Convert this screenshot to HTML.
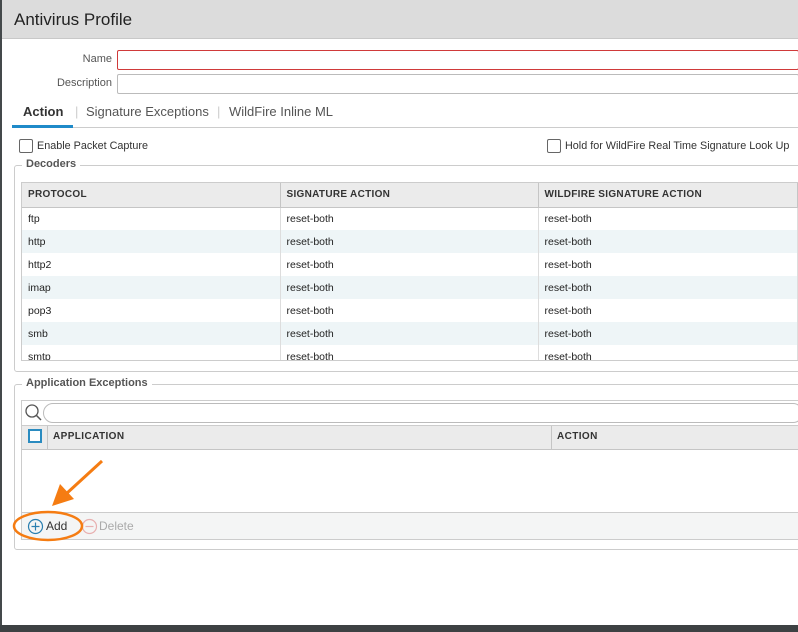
<!DOCTYPE html>
<html><head><style>
*{margin:0;padding:0;box-sizing:border-box}
body{width:798px;height:632px;background:#44494b;font-family:"Liberation Sans",sans-serif;position:relative;overflow:hidden;color:#333}
.a{position:absolute}
#dlg{left:2px;top:0;width:796px;height:625px;background:#fff;}
.hdr{left:2px;top:0;width:796px;height:39px;background:#dcdcdc;border-bottom:1px solid #c8c8c8}
.lbl{font-size:11px;color:#555;text-align:right;width:100px}
.inp{background:#fff;border:1px solid #bbb;border-radius:2px}
.t{font-size:10.8px;color:#333;white-space:nowrap}
.cb{width:14px;height:14px;border:1px solid #666;border-radius:2px;background:#fff}
.fs{border:1px solid #ccc;border-radius:3px}
.leg{background:#fff;padding:0 4px;font-size:11px;color:#555;font-weight:bold}
th,td{font-size:10.5px;text-align:left;padding-left:6px;white-space:nowrap}
table{border-collapse:collapse;table-layout:fixed}
th{height:24px;background:#ebebeb;color:#333;letter-spacing:.3px;border-right:1px solid #c5c5c5;border-bottom:1px solid #c5c5c5;font-weight:bold;font-size:10px}
td{height:23px;border-right:1px solid #ddd;color:#222}
tr.alt td{background:#eef5f7}
</style></head><body>
<div id="dlg" class="a"></div>
<div class="a hdr"></div>
<div class="a" style="left:14px;top:10px;font-size:17px;color:#222">Antivirus Profile</div>
<div class="a lbl" style="left:12px;top:53px">Name</div>
<div class="a inp" style="left:117px;top:50px;width:682px;height:20px;border-color:#d03a3a"></div>
<div class="a lbl" style="left:12px;top:77px">Description</div>
<div class="a inp" style="left:117px;top:74px;width:682px;height:20px"></div>
<div class="a" style="left:12px;top:127px;width:786px;height:1px;background:#ccc"></div>
<div class="a" style="left:12px;top:125px;width:61px;height:3px;background:#1f8ac9"></div>
<div class="a" style="left:23px;top:104px;font-size:13px;font-weight:bold;color:#333">Action</div>
<div class="a" style="left:75px;top:104px;font-size:13px;color:#ccc">|</div>
<div class="a" style="left:86px;top:104px;font-size:13px;color:#555">Signature Exceptions</div>
<div class="a" style="left:217px;top:104px;font-size:13px;color:#ccc">|</div>
<div class="a" style="left:229px;top:104px;font-size:13px;color:#555">WildFire Inline ML</div>
<div class="a cb" style="left:19px;top:139px"></div>
<div class="a t" style="left:37px;top:140px">Enable Packet Capture</div>
<div class="a cb" style="left:547px;top:139px"></div>
<div class="a t" style="left:565px;top:140px">Hold for WildFire Real Time Signature Look Up</div>
<div class="a fs" style="left:14px;top:165px;width:800px;height:207px"></div>
<div class="a leg" style="left:22px;top:158px">Decoders</div>
<div class="a" style="left:21px;top:182px;width:777px;height:179px;overflow:hidden;border:1px solid #ccc;border-right:none">
<table style="width:775px"><colgroup><col style="width:258px"><col style="width:258px"><col style="width:259px"></colgroup>
<tr><th>PROTOCOL</th><th>SIGNATURE ACTION</th><th>WILDFIRE SIGNATURE ACTION</th></tr>
<tr><td>ftp</td><td>reset-both</td><td>reset-both</td></tr>
<tr class="alt"><td>http</td><td>reset-both</td><td>reset-both</td></tr>
<tr><td>http2</td><td>reset-both</td><td>reset-both</td></tr>
<tr class="alt"><td>imap</td><td>reset-both</td><td>reset-both</td></tr>
<tr><td>pop3</td><td>reset-both</td><td>reset-both</td></tr>
<tr class="alt"><td>smb</td><td>reset-both</td><td>reset-both</td></tr>
<tr><td>smtp</td><td>reset-both</td><td>reset-both</td></tr>
</table></div>
<div class="a fs" style="left:14px;top:384px;width:800px;height:166px"></div>
<div class="a leg" style="left:22px;top:377px">Application Exceptions</div>
<div class="a" style="left:21px;top:400px;width:778px;height:140px;border:1px solid #ccc;border-right:none"></div>
<svg class="a" style="left:24px;top:403px" width="18" height="18"><circle cx="8" cy="8" r="6" fill="none" stroke="#555" stroke-width="1.3"/><line x1="12.5" y1="12.5" x2="17" y2="17" stroke="#555" stroke-width="1.5"/></svg>
<div class="a" style="left:43px;top:403px;width:760px;height:20px;border:1px solid #bbb;border-radius:10px"></div>
<div class="a" style="left:22px;top:425px;width:777px;height:25px;background:#ebebeb;border-top:1px solid #ccc;border-bottom:1px solid #c5c5c5"></div>
<div class="a" style="left:28px;top:429px;width:14px;height:14px;border:2px solid #2a8bc0;background:#fff"></div>
<div class="a" style="left:47px;top:426px;width:1px;height:23px;background:#c5c5c5"></div>
<div class="a" style="left:551px;top:426px;width:1px;height:23px;background:#c5c5c5"></div>
<div class="a" style="left:53px;top:431px;font-size:10px;font-weight:bold;letter-spacing:.4px">APPLICATION</div>
<div class="a" style="left:557px;top:431px;font-size:10px;font-weight:bold;letter-spacing:.4px">ACTION</div>
<div class="a" style="left:22px;top:512px;width:777px;height:28px;background:#f4f5f5;border-top:1px solid #ccc;border-bottom:1px solid #ccc"></div>
<svg class="a" style="left:27px;top:518px" width="17" height="17"><circle cx="8.5" cy="8.5" r="7" fill="none" stroke="#2a7fb0" stroke-width="1.2"/><path d="M8.5 4.5v8M4.5 8.5h8" stroke="#2a7fb0" stroke-width="1.2"/></svg>
<div class="a" style="left:46px;top:519px;font-size:12px;color:#333">Add</div>
<svg class="a" style="left:81px;top:518px" width="17" height="17"><circle cx="8.5" cy="8.5" r="7" fill="none" stroke="#e8b0b0" stroke-width="1.2"/><path d="M4.5 8.5h8" stroke="#e8b0b0" stroke-width="1.2"/></svg>
<div class="a" style="left:99px;top:519px;font-size:12px;color:#aaa">Delete</div>
<svg class="a" style="left:0;top:0" width="798" height="632">
<ellipse cx="48" cy="526" rx="34" ry="14" fill="none" stroke="#f57c12" stroke-width="2.5"/>
<line x1="102" y1="461" x2="66" y2="494" stroke="#f57c12" stroke-width="3"/>
<polygon points="52,506 60,484 74,499" fill="#f57c12"/>
</svg>
<div class="a" style="left:0;top:625px;width:798px;height:7px;background:#3d4143"></div>
</body></html>
